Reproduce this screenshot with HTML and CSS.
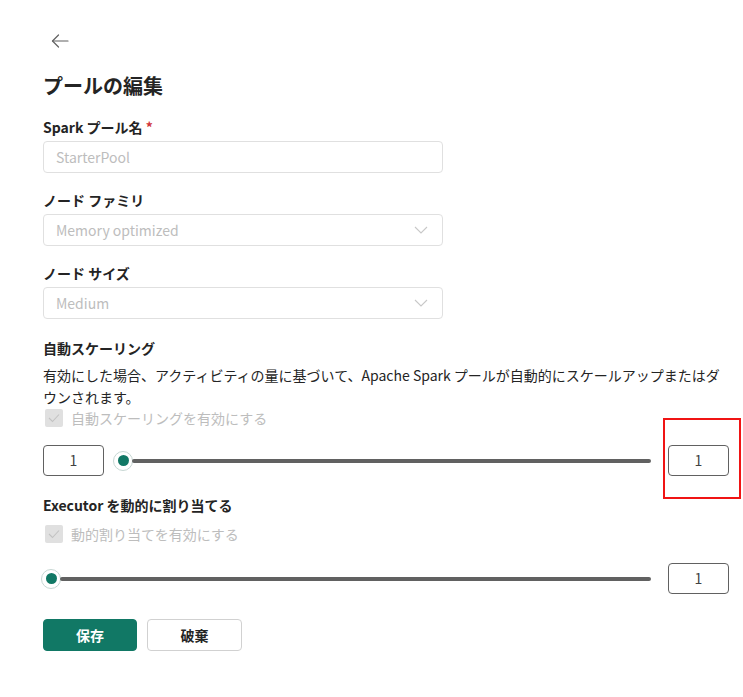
FILE: index.html
```html
<!DOCTYPE html>
<html lang="ja">
<head>
    <meta charset="UTF-8">
    <meta name="viewport" content="width=device-width, initial-scale=1.0">
    <title>プールの編集</title>
    <link rel="stylesheet" href="styles.css">
</head>
<body>

    <div class="page">
        <!-- Back -->
        <button class="back-button" aria-label="戻る">
            <svg width="18" height="14" viewBox="0 0 18 14" fill="none" stroke="#616161" stroke-width="1.2" stroke-linecap="round" stroke-linejoin="round">
                <path d="M7.5 1 L1.5 7 L7.5 13"/>
                <path d="M1.5 7 H17"/>
            </svg>
        </button>

        <h1 class="title">プールの編集</h1>

        <!-- Basic fields -->
        <div class="field">
            <label class="field-label">Spark プール名 <span class="required">*</span></label>
            <div class="text-box">StarterPool</div>
        </div>

        <div class="field">
            <label class="field-label">ノード ファミリ</label>
            <div class="text-box dropdown">
                Memory optimized
                <svg class="chevron" width="14" height="8" viewBox="0 0 14 8" fill="none" stroke="#c8c8c8" stroke-width="1.1"><path d="M1 1 L7 7 L13 1"/></svg>
            </div>
        </div>

        <div class="field">
            <label class="field-label">ノード サイズ</label>
            <div class="text-box dropdown">
                Medium
                <svg class="chevron" width="14" height="8" viewBox="0 0 14 8" fill="none" stroke="#c8c8c8" stroke-width="1.1"><path d="M1 1 L7 7 L13 1"/></svg>
            </div>
        </div>

        <!-- Autoscale -->
        <div class="section">
            <div class="section-heading">自動スケーリング</div>
            <p class="section-text">有効にした場合、アクティビティの量に基づいて、Apache Spark プールが自動的にスケールアップまたはダウンされます。</p>
            <div class="checkbox-row">
                <span class="checkbox">
                    <svg width="12" height="10" viewBox="0 0 12 10" fill="none" stroke="#c2c2c2" stroke-width="1.1"><path d="M1 5 L4.5 8.5 L11 1.5"/></svg>
                </span>
                自動スケーリングを有効にする
            </div>
            <div class="slider-row first">
                <div class="number-box">1</div>
                <div class="slider">
                    <span class="thumb"></span>
                    <span class="track"></span>
                </div>
                <div class="number-box">1</div>
                <span class="highlight"></span>
            </div>
        </div>

        <!-- Dynamic executors -->
        <div class="section">
            <div class="section-heading">Executor を動的に割り当てる</div>
            <div class="checkbox-row">
                <span class="checkbox">
                    <svg width="12" height="10" viewBox="0 0 12 10" fill="none" stroke="#c2c2c2" stroke-width="1.1"><path d="M1 5 L4.5 8.5 L11 1.5"/></svg>
                </span>
                動的割り当てを有効にする
            </div>
            <div class="slider-row second">
                <div class="slider">
                    <span class="thumb"></span>
                    <span class="track"></span>
                </div>
                <div class="number-box">1</div>
            </div>
        </div>

        <div class="actions">
            <button class="btn primary">保存</button>
            <button class="btn">破棄</button>
        </div>
    </div>

</body>
</html>
```

FILE: styles.css
```css
body {
    margin: 0;
    font-family: "Noto Sans CJK JP", "Noto Sans", sans-serif;
    font-size: 14px;
    color: #242424;
    background: #fff;
}

.page {
    padding: 28px 0 0 43px;
    width: 686px;
}

.back-button {
    display: block;
    border: none;
    background: none;
    padding: 0;
    margin: 0 0 0 8px;
    height: 28px;
    cursor: pointer;
}

.title {
    font-size: 20px;
    font-weight: 700;
    line-height: 28px;
    margin: 16px 0 17px;
}

.field {
    width: 400px;
    margin-bottom: 17px;
}

.field-label {
    display: block;
    font-weight: 600;
    line-height: 20px;
    margin-bottom: 4px;
}

.required {
    color: #d13438;
}

.text-box {
    box-sizing: border-box;
    height: 32px;
    border: 1px solid #e0e0e0;
    border-radius: 4px;
    padding: 0 12px;
    line-height: 30px;
    color: #bdbdbd;
}

.dropdown {
    display: flex;
    justify-content: space-between;
    align-items: center;
}

.chevron {
    margin-right: 2px;
}

/* Sections */
.section {
    margin-top: 19px;
}

.section-heading {
    font-weight: 600;
    line-height: 20px;
    margin-bottom: 6px;
}

.section-heading + .checkbox-row {
    margin-top: 9px;
}

.section-text {
    margin: 0;
    line-height: 22px;
}

.checkbox-row {
    display: flex;
    align-items: center;
    gap: 8px;
    line-height: 20px;
    color: #bdbdbd;
    padding-left: 2px;
}

.checkbox {
    width: 18px;
    height: 18px;
    border-radius: 2px;
    background: #e0e0e0;
    display: flex;
    align-items: center;
    justify-content: center;
}

/* Sliders */
.slider-row {
    position: relative;
    display: flex;
    align-items: center;
}

.slider-row.first {
    margin-top: 17px;
}

.slider-row.second {
    margin-top: 19px;
}

.number-box {
    box-sizing: border-box;
    width: 61px;
    height: 31px;
    border: 1px solid #616161;
    border-radius: 4px;
    text-align: center;
    line-height: 29px;
    color: #424242;
}

.slider {
    flex: 1;
    display: flex;
    align-items: center;
    height: 20px;
}

.first .slider {
    margin: 0 17px 0 9px;
}

.second .slider {
    margin: 0 17px 0 -2px;
}

.thumb {
    box-sizing: border-box;
    width: 20px;
    height: 20px;
    border-radius: 50%;
    border: 1px solid #c7d7d3;
    background: #fff;
    display: flex;
    align-items: center;
    justify-content: center;
    flex-shrink: 0;
}

.thumb::after {
    content: "";
    width: 11px;
    height: 11px;
    border-radius: 50%;
    background: #117865;
}

.track {
    flex: 1;
    height: 4px;
    border-radius: 2px;
    background: #616161;
    margin-left: -1px;
}

.highlight {
    position: absolute;
    right: -12px;
    top: -27px;
    width: 78px;
    height: 81px;
    box-sizing: border-box;
    border: 2px solid #f01414;
}

/* Buttons */
.actions {
    display: flex;
    gap: 10px;
    margin-top: 25px;
}

.btn {
    box-sizing: border-box;
    width: 95px;
    height: 32px;
    border: 1px solid #d1d1d1;
    border-radius: 4px;
    background: #fff;
    font-family: inherit;
    font-size: 14px;
    font-weight: 600;
    color: #242424;
}

.btn.primary {
    width: 94px;
    background: #117865;
    border-color: #117865;
    color: #fff;
    font-weight: 700;
}
```
